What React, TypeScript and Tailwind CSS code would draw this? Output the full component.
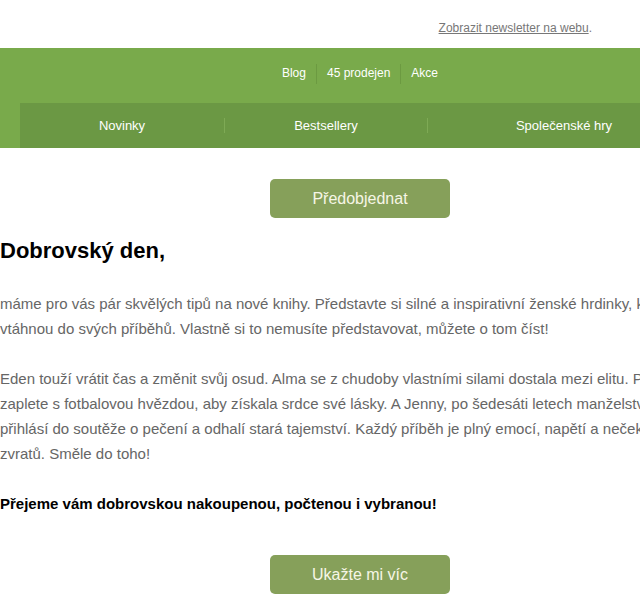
import React from 'react';

const TOP_LINKS = ['Blog', '45 prodejen', 'Akce'];

const NAV = [
  { label: 'Novinky', w: 'w-[204px]' },
  { label: 'Bestsellery', w: 'w-[203px]' },
  { label: 'Společenské hry', w: 'w-[273px]' },
];

function GreenButton({ children }: { children: React.ReactNode }) {
  return (
    <div className="flex justify-center">
      <a className="flex h-[39px] w-[180px] items-center justify-center rounded-[5px] bg-[#86a05a] text-[16px] text-[#f6f6e6]">
        {children}
      </a>
    </div>
  );
}

export default function App() {
  return (
    <div className="w-full overflow-hidden bg-white font-['Liberation_Sans',Arial,sans-serif]">
      <div className="w-[720px]">
        {/* odkaz na webovou verzi */}
        <div className="flex h-12 justify-end pr-[128px] pt-[20px]">
          <span className="text-[12px] leading-4 text-[#777]">
            <a className="underline">Zobrazit newsletter na webu</a>.
          </span>
        </div>

        {/* hlavička */}
        <div className="bg-[#79aa4b]">
          <div className="flex justify-center pb-[19px] pt-4">
            {TOP_LINKS.map((l, i) => (
              <div
                key={l}
                className={`flex h-5 items-center px-[10px] text-[12px] text-white ${
                  i > 0 ? 'border-l border-[#6c9a41]' : ''
                }`}
              >
                <span className="-mt-[3px]">{l}</span>
              </div>
            ))}
          </div>
          <div className="mx-5 flex h-[45px] items-center bg-[#6b9844]">
            {NAV.map((n, i) => (
              <div
                key={n.label}
                className={`flex h-[15px] items-center justify-center text-[13px] text-white ${n.w} ${
                  i > 0 ? 'border-l border-[#7eaa55]' : ''
                }`}
              >
                <span>{n.label}</span>
              </div>
            ))}
          </div>
        </div>

        <div className="pt-[31px]">
          <GreenButton>Předobjednat</GreenButton>
        </div>

        <h1 className="mt-[20px] text-[22px] font-bold leading-[26px] text-black">Dobrovský den,</h1>

        <p className="mt-[27px] whitespace-nowrap text-[15px] leading-[25px] text-[#666]">
          máme pro vás pár skvělých tipů na nové knihy. Představte si silné a inspirativní ženské hrdinky, které vás
          <br />
          vtáhnou do svých příběhů. Vlastně si to nemusíte představovat, můžete o tom číst!
        </p>

        <p className="mt-[25px] whitespace-nowrap text-[15px] leading-[25px] text-[#666]">
          Eden touží vrátit čas a změnit svůj osud. Alma se z chudoby vlastními silami dostala mezi elitu. Poppy se
          <br />
          zaplete s fotbalovou hvězdou, aby získala srdce své lásky. A Jenny, po šedesáti letech manželství, se
          <br />
          přihlásí do soutěže o pečení a odhalí stará tajemství. Každý příběh je plný emocí, napětí a nečekaných
          <br />
          zvratů. Směle do toho!
        </p>

        <p className="mt-[25px] text-[15px] font-bold leading-[25px] text-black">
          Přejeme vám dobrovskou nakoupenou, počtenou i vybranou!
        </p>

        <div className="pb-10 pt-[39px]">
          <GreenButton>Ukažte mi víc</GreenButton>
        </div>
      </div>
    </div>
  );
}
